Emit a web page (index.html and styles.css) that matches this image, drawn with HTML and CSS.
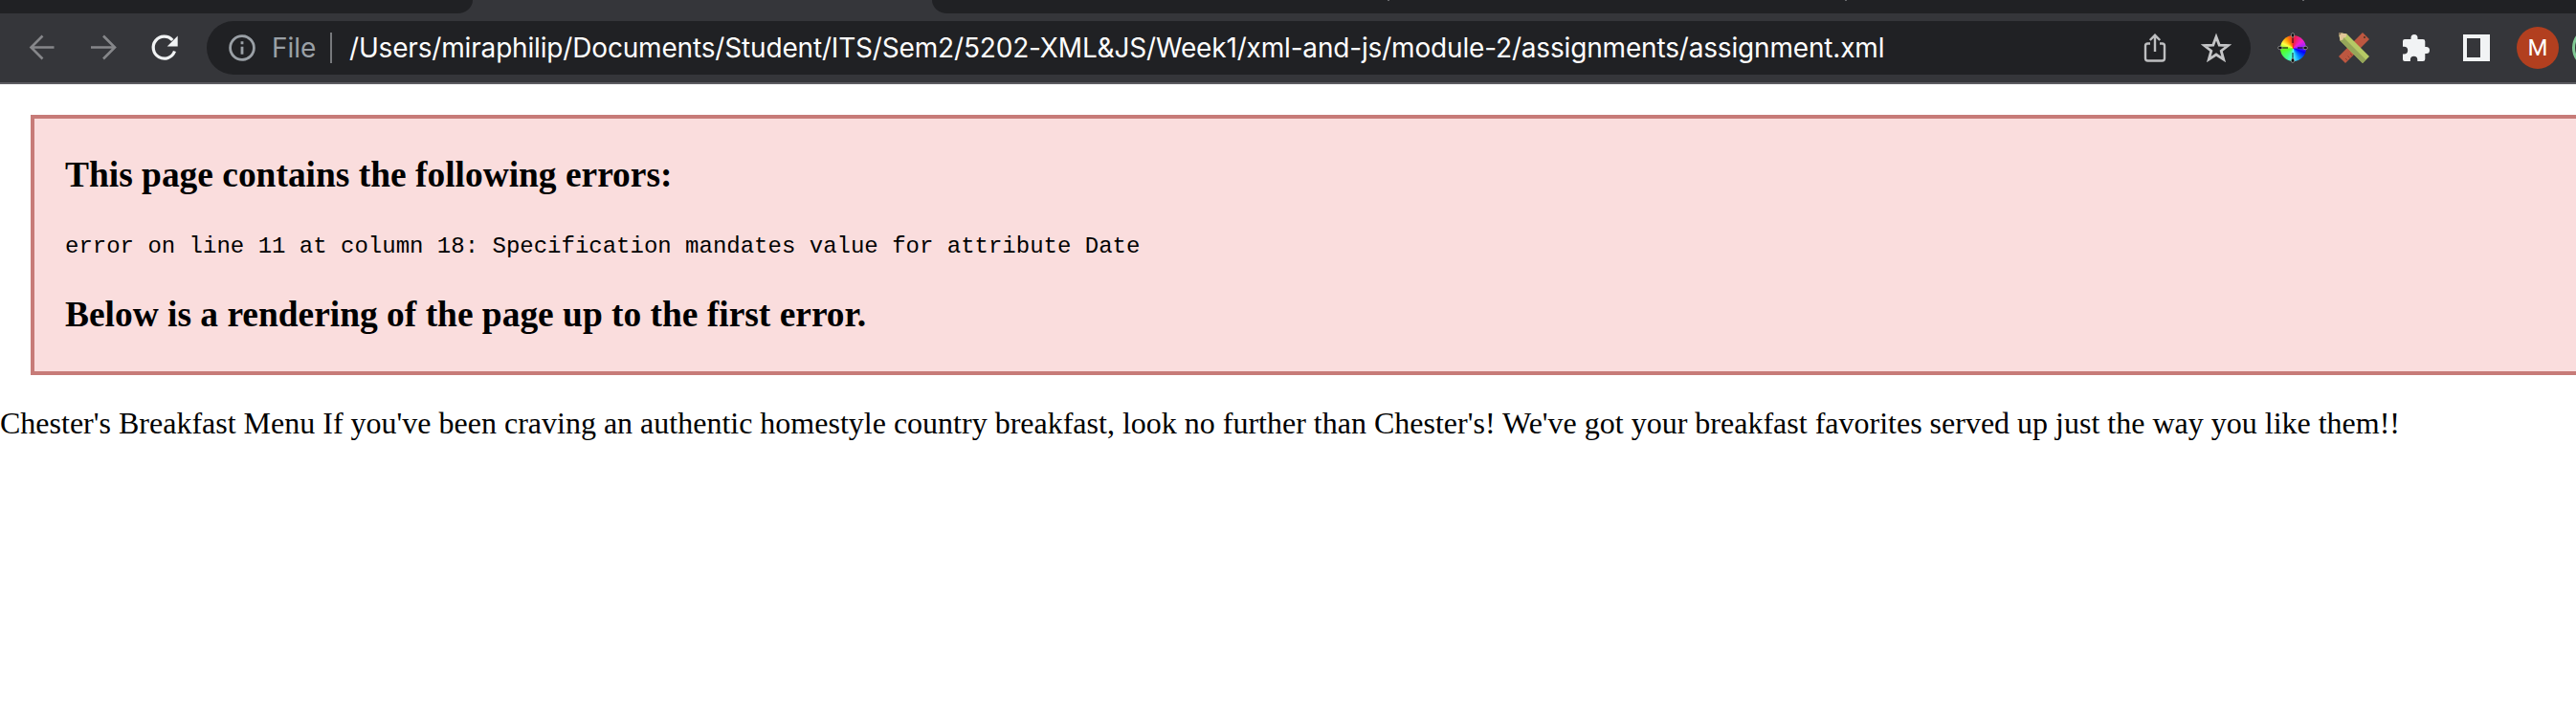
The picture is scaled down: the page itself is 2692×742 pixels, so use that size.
FILE: index.html
```html
<!DOCTYPE html>
<html lang="en">
<head>
<meta charset="utf-8">
<title>assignment.xml</title>
<link rel="stylesheet" href="styles.css">
</head>
<body>
<header class="browser">
  <div class="tabstrip">
    <div class="tabs-left"></div>
    <div class="tabs-right"><i class="tick"></i><i class="tick"></i><i class="tick"></i></div>
  </div>
  <div class="toolbar">
    <nav class="nav">
      <svg class="ico dim" viewBox="0 0 32 32"><path d="M28.500 15.500H5M16.500 3.500 4.500 15.500 16.500 27.500"/></svg>
      <svg class="ico dim" viewBox="0 0 32 32"><path d="M3 15.500h25M16 3.500 28 15.500 16 27.500"/></svg>
      <svg class="ico bright" viewBox="0 0 32 32"><path class="arc" d="M26.500 19.500A11.500 11.500 0 1 1 24.300 8"/><path class="head" d="M29.700 3.500v11h-11z"/></svg>
    </nav>
    <div class="omnibox">
      <svg class="info" viewBox="0 0 28 28"><circle cx="14" cy="14" r="12.400"/><path d="M14 12.800v8M14 7.200v3"/></svg>
      <span class="scheme">File</span>
      <span class="divider"></span>
      <span class="url">/Users/miraphilip/Documents/Student/ITS/Sem2/5202-XML&amp;JS/Week1/xml-and-js/module-2/assignments/assignment.xml</span>
      <svg class="share" viewBox="0 0 32 32"><path d="M11 11.500H8.500q-2.500 0-2.500 2.500v13q0 2.500 2.500 2.500h15q2.500 0 2.500-2.500V14q0-2.500-2.500-2.500H21M16 20V3.500M10.800 8 16 2.800 21.200 8"/></svg>
      <svg class="star" viewBox="0 0 32 32"><path d="m16 4.500 3.200 8.600 9.300.4-7.300 5.700 2.500 8.900L16 23l-7.700 5.100 2.500-8.900-7.300-5.700 9.300-.4z"/></svg>
    </div>
    <div class="extensions">
      <div class="wheel"><i></i><svg viewBox="0 0 32 32"><path d="M16 4v7M16 21v7M4 16h7M21 16h7" stroke="#111" stroke-opacity=".75" stroke-width="1.300"/><g fill="#111" stroke="#bbb" stroke-width=".6"><ellipse cx="16" cy="2.800" rx="1.700" ry="2.300"/><ellipse cx="16" cy="29.200" rx="1.700" ry="2.300"/><ellipse cx="2.800" cy="16" rx="2.300" ry="1.700"/><ellipse cx="29.200" cy="16" rx="2.300" ry="1.700"/></g></svg></div>
      <svg class="tools" viewBox="0 0 32 32"><path d="M25 0 32 7 7 32 0 25z" fill="#bd5740"/><path d="m9 29-2-2m4.500-.5-2-2m4.500-.5-2-2" stroke="#8e3f30"/><circle cx="27" cy="5" r="1" fill="#432"/><path d="M0 0 8.500 1.500 32 25 25 32 1.500 8.500z" fill="#b5c965"/><path d="m1.500 8.500 3.500-3.500 23.500 23.500L25 32z" fill="#95a659"/><path d="M0 0 8.500 1.500 7.500 5 5 5.500 4.500 7.500 1.500 8.500z" fill="#e0c597"/><path d="M0 0 3 .6 .6 3z" fill="#765"/></svg>
      <svg class="puzzle" viewBox="0 0 30 30"><path d="M3 6h6.500V4.500a3.500 3.500 0 0 1 7 0V6H22q2.300 0 2.300 2.300V14h1.200a3.500 3.500 0 0 1 0 7h-1.200v5.700Q24.300 29 22 29h-5.700v-1.500a3.700 3.700 0 0 0-7.400 0V29H3Q1 29 1 27v-5.500h1.300a3.900 3.900 0 0 0 0-7.800H1V8q0-2 2-2z"/></svg>
      <svg class="panel" viewBox="0 0 28 28"><path fill-rule="evenodd" d="M0 0h28v28H0zM4 4v20h14V4z"/></svg>
      <div class="avatar">M</div>
      <div class="ring"></div>
    </div>
  </div>
</header>
<main>
  <section class="parser-error">
    <h3>This page contains the following errors:</h3>
    <div class="message">error on line 11 at column 18: Specification mandates value for attribute Date</div>
    <h3>Below is a rendering of the page up to the first error.</h3>
  </section>
  <p class="content">Chester's Breakfast Menu If you've been craving an authentic homestyle country breakfast, look no further than Chester's! We've got your breakfast favorites served up just the way you like them!!</p>
</main>
</body>
</html>
```
FILE: styles.css
```css
* { box-sizing: border-box; }
body { margin: 0; background: #fff; color: #000; font-family: "Liberation Serif", "Times New Roman", serif; font-size: 32px; overflow: hidden; }
svg { display: block; flex: none; fill: none; }
.browser { height: 88px; background: #35363a; border-bottom: 2px solid #5d5d62; overflow: hidden; }
.tabstrip { display: flex; justify-content: space-between; height: 14px; }
.tabs-left { width: 494px; background: #202124; border-bottom-right-radius: 16px 14px; }
.tabs-right { display: flex; width: 1718px; padding-left: 476px; gap: 476px; background: #202124; border-bottom-left-radius: 16px 14px; }
.tick { width: 2px; height: 1px; background: #66676a; }
.toolbar { display: flex; align-items: center; height: 72px; padding-left: 28px; }
.nav { display: flex; gap: 32px; width: 188px; flex: none; }
.ico { width: 32px; height: 32px; }
.dim { stroke: #86878a; stroke-width: 2.6; }
.bright .arc { stroke: #f1f3f4; stroke-width: 3.2; }
.bright .head { fill: #f1f3f4; }
.omnibox { display: flex; align-items: center; flex: none; width: 2136px; height: 56px; padding: 0 20px 0 23px; border-radius: 28px; background: #202124; font-family: Inter, sans-serif; font-size: 28px; line-height: 56px; white-space: nowrap; }
.info { width: 28px; height: 28px; stroke: #9aa0a6; stroke-width: 2.8; }
.scheme { width: 61px; margin-left: 17px; color: #9aa0a6; }
.divider { width: 2px; height: 32px; background: #77797c; }
.url { flex: 1; margin-left: 18px; color: #fff; letter-spacing: -0.17px; }
.share { width: 32px; height: 32px; margin-right: 32px; stroke: #bdbec0; stroke-width: 2.4; }
.star { width: 32px; height: 32px; stroke: #c4c5c7; stroke-width: 2.8; }
.extensions { display: flex; align-items: center; flex: none; margin-left: 28px; }
.wheel { position: relative; width: 32px; height: 32px; margin-right: 32px; padding: 2.500px; }
.wheel i { display: block; width: 27px; height: 27px; border-radius: 50%; background: conic-gradient(#f02030, #f020d0 50deg, #a020ff 80deg, #00f 110deg, #08f 145deg, #5ff 180deg, #4f8 215deg, #5f2 260deg, #ff4 295deg, #f90 325deg, #f02030); }
.wheel svg { position: absolute; inset: 0; }
.tools { width: 32px; height: 32px; }
.puzzle { width: 30px; height: 30px; margin-left: 34px; fill: #f1f3f4; }
.panel { width: 28px; height: 28px; margin-left: 34px; fill: #f1f3f4; }
.avatar { width: 44px; height: 44px; margin-left: 28px; border-radius: 50%; background: #b23f1f; color: #fff; font: 24px/45px Roboto, sans-serif; text-align: center; }
.ring { width: 44px; height: 44px; margin-left: 14px; flex: none; border: 3px solid #81c995; border-radius: 50%; }
.parser-error { height: 272px; margin: 32px 0 0 32px; padding: 38px 32px 0; border: 4px solid #c77b78; border-right: 0; background: #fadddd; }
h3 { margin: 0; font-size: 37.440px; line-height: 41px; }
.message { margin: 41px 0 37px; font: 24px/27px "Liberation Mono", "Courier New", monospace; }
.content { margin: 32px 0 0; line-height: 36px; white-space: nowrap; }
```
